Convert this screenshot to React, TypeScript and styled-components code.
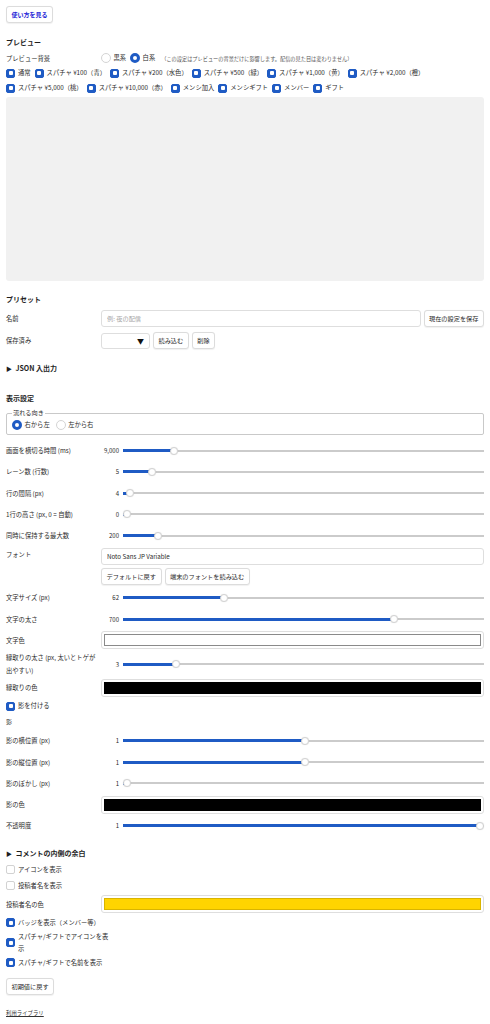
import React from 'react';
import styled, { createGlobalStyle } from 'styled-components';

const BLUE = '#1f5bc4';

const GlobalStyle = createGlobalStyle`
  html, body { margin: 0; padding: 0; background: #fff; }
  body {
    font-family: "Noto Sans CJK JP", "Noto Sans", sans-serif;
    font-size: 6.3px;
    color: #2a2a2a;
  }
  * { box-sizing: border-box; }
`;

const Page = styled.div`
  display: flex;
  flex-direction: column;
  padding: 6px 6px 10px;
`;

const Button = styled.button<{ $primary?: boolean; $mt?: number }>`
  align-self: flex-start;
  height: 17px;
  padding: 0 4.5px;
  margin: ${(p) => (p.$mt ? `${p.$mt}px` : '0')} 0 0;
  border: 1px solid #dcdcdc;
  border-radius: 3px;
  background: #fff;
  font-family: inherit;
  font-size: ${(p) => (p.$primary ? '6px' : '6.2px')};
  font-weight: ${(p) => (p.$primary ? 700 : 400)};
  color: ${(p) => (p.$primary ? '#1b1bd6' : '#2a2a2a')};
  white-space: nowrap;
  box-shadow: 0 0.5px 1px rgba(0, 0, 0, 0.06);
  cursor: pointer;
  flex: none;
`;

const Title = styled.h2<{ $mt: number }>`
  margin: ${(p) => p.$mt}px 0 0;
  font-size: 7px;
  font-weight: 700;
  line-height: 13px;
  color: #1e1e1e;
`;

const FieldRow = styled.div<{ $h?: string; $mt?: number; $pad?: boolean }>`
  display: grid;
  grid-template-columns: 92px 1fr;
  column-gap: 3px;
  align-items: center;
  min-height: ${(p) => p.$h ?? '21.25px'};
  margin-top: ${(p) => (p.$mt ? `${p.$mt}px` : '0')};
  padding: ${(p) => (p.$pad ? '2px 0' : '0')};
`;

const FieldLabel = styled.div<{ $top?: boolean }>`
  line-height: 13px;
  align-self: ${(p) => (p.$top ? 'start' : 'center')};
  color: #2a2a2a;
`;

const InlineGroup = styled.div<{ $gap?: number }>`
  display: flex;
  align-items: center;
  gap: ${(p) => p.$gap ?? 3}px;
  min-width: 0;
`;

const RadioInput = styled.input.attrs({ type: 'radio' })`
  appearance: none;
  -webkit-appearance: none;
  width: 10px;
  height: 10px;
  margin: 0;
  border-radius: 50%;
  border: 1px solid #d4d4d4;
  background: #fff;
  flex: none;
  &:checked {
    border: 3px solid ${BLUE};
  }
`;

const RadioItem = styled.label`
  display: inline-flex;
  align-items: center;
  gap: 2.5px;
  line-height: 10px;
  white-space: nowrap;
`;

const Note = styled.span`
  margin-left: 2px;
  font-size: 5.2px;
  color: #555;
  white-space: nowrap;
`;

const CheckInput = styled.input.attrs({ type: 'checkbox' })`
  appearance: none;
  -webkit-appearance: none;
  position: relative;
  width: 9px;
  height: 9px;
  margin: 0;
  border-radius: 2px;
  border: 1px solid #d2d2d2;
  background: #fff;
  flex: none;
  &:checked {
    border-color: ${BLUE};
    background: ${BLUE};
  }
  &:checked::after {
    content: '';
    position: absolute;
    left: 1.5px;
    top: 1.5px;
    width: 4px;
    height: 4px;
    border-radius: 1px;
    background: #fff;
  }
`;

const CheckWrap = styled.div`
  display: flex;
  flex-wrap: wrap;
  column-gap: 4px;
  row-gap: 3px;
  margin-top: 2.5px;
`;

const CheckItem = styled.label<{ $narrow?: boolean }>`
  display: flex;
  align-items: center;
  gap: 3px;
  line-height: 12px;
  min-height: ${(p) => (p.$narrow ? '16px' : '12px')};
  max-width: ${(p) => (p.$narrow ? '106px' : 'none')};
  white-space: ${(p) => (p.$narrow ? 'normal' : 'nowrap')};
`;

const PreviewBox = styled.div`
  height: 184px;
  margin-top: 3px;
  border-radius: 3px;
  background: #f1f1f1;
`;

const TextInput = styled.input`
  width: 100%;
  min-width: 0;
  height: 17px;
  padding: 0 5px;
  border: 1px solid #dedede;
  border-radius: 3px;
  font-family: inherit;
  font-size: 6.2px;
  color: #2a2a2a;
  &::placeholder {
    color: #a8a8a8;
  }
`;

const SelectBox = styled.div`
  width: 49px;
  height: 16px;
  display: flex;
  align-items: center;
  justify-content: flex-end;
  padding-right: 5px;
  border: 1px solid #dedede;
  border-radius: 3px;
  font-size: 7px;
  color: #111;
  flex: none;
`;

const Disclosure = styled.details<{ $mt: number }>`
  margin-top: ${(p) => p.$mt}px;
  & > summary {
    list-style: none;
    display: flex;
    align-items: center;
    gap: 3.5px;
    font-size: 7px;
    font-weight: 700;
    line-height: 13px;
    color: #1e1e1e;
    cursor: pointer;
  }
  & > summary::-webkit-details-marker {
    display: none;
  }
`;

const Caret = styled.span`
  font-size: 6px;
  line-height: 13px;
`;

const Fieldset = styled.fieldset`
  margin: 4.5px 0 0;
  padding: 3px 5px 4px;
  border: 1px solid #c9c9c9;
  border-radius: 2px;
  & > legend {
    padding: 0 1px;
    font-size: 6.2px;
    line-height: 8px;
  }
`;

const Stack = styled.div<{ $mt: number }>`
  display: flex;
  flex-direction: column;
  margin-top: ${(p) => p.$mt}px;
`;

const SliderWrap = styled.div`
  display: flex;
  align-items: center;
  gap: 4px;
`;

const SliderValue = styled.span`
  width: 18px;
  text-align: right;
  font-size: 6px;
  line-height: 13px;
  flex: none;
`;

const Range = styled.input.attrs({ type: 'range' })`
  -webkit-appearance: none;
  appearance: none;
  flex: 1;
  min-width: 0;
  height: 8px;
  margin: 0;
  background:
    linear-gradient(${BLUE}, ${BLUE}) left center / var(--fill) 3px no-repeat,
    linear-gradient(#cbcbcb, #cbcbcb) left center / 100% 2px no-repeat;
  &::-webkit-slider-runnable-track {
    height: 8px;
    background: transparent;
  }
  &::-webkit-slider-thumb {
    -webkit-appearance: none;
    width: 8px;
    height: 8px;
    border-radius: 50%;
    background: #fff;
    border: 1px solid #d2d2d2;
    box-shadow: 0 0 1px rgba(0, 0, 0, 0.15);
  }
`;

const ColorField = styled.div`
  height: 18px;
  padding: 2px;
  border: 1px solid #dedede;
  border-radius: 3px;
  display: flex;
`;

const Swatch = styled.div<{ $color: string; $edge: string }>`
  flex: 1;
  background: ${(p) => p.$color};
  border: 1px solid ${(p) => p.$edge};
`;

const PlainRow = styled.div`
  line-height: 16px;
  height: 16px;
  font-size: 6px;
`;

const FootLink = styled.a`
  margin-top: 13px;
  align-self: flex-start;
  font-size: 5.4px;
  line-height: 10px;
  color: #333;
  text-decoration: underline;
`;

type SliderProps = { label: string; value: string; pct: number };

const SliderField = ({ label, value, pct }: SliderProps) => (
  <FieldRow>
    <FieldLabel>{label}</FieldLabel>
    <SliderWrap>
      <SliderValue>{value}</SliderValue>
      <Range
        min={0}
        max={1000}
        defaultValue={Math.round(pct * 1000)}
        style={{ ['--fill' as string]: `calc(4px + ${pct} * (100% - 8px))` } as React.CSSProperties}
      />
    </SliderWrap>
  </FieldRow>
);

const ColorRow = ({ label, color, edge }: { label: string; color: string; edge: string }) => (
  <FieldRow>
    <FieldLabel>{label}</FieldLabel>
    <ColorField>
      <Swatch $color={color} $edge={edge} />
    </ColorField>
  </FieldRow>
);

const Check = ({ label, checked, narrow }: { label: string; checked?: boolean; narrow?: boolean }) => (
  <CheckItem $narrow={narrow}>
    <CheckInput defaultChecked={checked} />
    <span>{label}</span>
  </CheckItem>
);

const previewTypes = [
  '通常',
  'スパチャ ¥100（青）',
  'スパチャ ¥200（水色）',
  'スパチャ ¥500（緑）',
  'スパチャ ¥1,000（黄）',
  'スパチャ ¥2,000（橙）',
  'スパチャ ¥5,000（桃）',
  'スパチャ ¥10,000（赤）',
  'メンシ加入',
  'メンシギフト',
  'メンバー',
  'ギフト',
];

export default function App() {
  return (
    <>
      <GlobalStyle />
      <Page>
        <Button $primary>使い方を見る</Button>

        <Title $mt={12.5}>プレビュー</Title>
        <FieldRow $h="13px" $mt={3}>
          <FieldLabel>プレビュー背景</FieldLabel>
          <InlineGroup $gap={4}>
            <RadioItem>
              <RadioInput name="bg" />
              黒系
            </RadioItem>
            <RadioItem>
              <RadioInput name="bg" defaultChecked />
              白系
            </RadioItem>
            <Note>（この設定はプレビューの背景だけに影響します。配信の見た目は変わりません）</Note>
          </InlineGroup>
        </FieldRow>
        <CheckWrap>
          {previewTypes.map((t) => (
            <Check key={t} label={t} checked />
          ))}
        </CheckWrap>
        <PreviewBox />

        <Title $mt={11.5}>プリセット</Title>
        <FieldRow $h="17px" $mt={4.5}>
          <FieldLabel>名前</FieldLabel>
          <InlineGroup>
            <TextInput placeholder="例: 夜の配信" />
            <Button>現在の設定を保存</Button>
          </InlineGroup>
        </FieldRow>
        <FieldRow $h="16px" $mt={5}>
          <FieldLabel>保存済み</FieldLabel>
          <InlineGroup>
            <SelectBox>▼</SelectBox>
            <Button>読み込む</Button>
            <Button>削除</Button>
          </InlineGroup>
        </FieldRow>

        <Disclosure $mt={12.5}>
          <summary>
            <Caret>▶</Caret>
            JSON 入出力
          </summary>
        </Disclosure>

        <Title $mt={17}>表示設定</Title>
        <Fieldset>
          <legend>流れる向き</legend>
          <InlineGroup $gap={6}>
            <RadioItem>
              <RadioInput name="dir" defaultChecked />
              右から左
            </RadioItem>
            <RadioItem>
              <RadioInput name="dir" />
              左から右
            </RadioItem>
          </InlineGroup>
        </Fieldset>

        <Stack $mt={5}>
          <SliderField label="画面を横切る時間 (ms)" value="9,000" pct={0.133} />
          <SliderField label="レーン数 (行数)" value="5" pct={0.071} />
          <SliderField label="行の間隔 (px)" value="4" pct={0.008} />
          <SliderField label="1行の高さ (px, 0 = 自動)" value="0" pct={0} />
          <SliderField label="同時に保持する最大数" value="200" pct={0.088} />
          <FieldRow $pad>
            <FieldLabel $top>フォント</FieldLabel>
            <Stack $mt={0}>
              <TextInput defaultValue="Noto Sans JP Variable" />
              <InlineGroup>
                <Button $mt={3}>デフォルトに戻す</Button>
                <Button $mt={3}>端末のフォントを読み込む</Button>
              </InlineGroup>
            </Stack>
          </FieldRow>
          <SliderField label="文字サイズ (px)" value="62" pct={0.275} />
          <SliderField label="文字の太さ" value="700" pct={0.756} />
          <ColorRow label="文字色" color="#ffffff" edge="#8a8a8a" />
          <SliderField label="縁取りの太さ (px, 太いとトゲが出やすい)" value="3" pct={0.139} />
          <ColorRow label="縁取りの色" color="#000000" edge="#000000" />
          <Check label="影を付ける" checked narrow />
          <PlainRow>影</PlainRow>
          <SliderField label="影の横位置 (px)" value="1" pct={0.504} />
          <SliderField label="影の縦位置 (px)" value="1" pct={0.504} />
          <SliderField label="影のぼかし (px)" value="1" pct={0} />
          <ColorRow label="影の色" color="#000000" edge="#000000" />
          <SliderField label="不透明度" value="1" pct={1} />
        </Stack>

        <Disclosure $mt={10.6}>
          <summary>
            <Caret>▶</Caret>
            コメントの内側の余白
          </summary>
        </Disclosure>

        <Stack $mt={1.5}>
          <Check label="アイコンを表示" narrow />
          <Check label="投稿者名を表示" narrow />
          <ColorRow label="投稿者名の色" color="#ffd400" edge="#d9b400" />
          <Check label="バッジを表示（メンバー等）" checked narrow />
          <Check label="スパチャ/ギフトでアイコンを表示" checked narrow />
          <Check label="スパチャ/ギフトで名前を表示" checked narrow />
        </Stack>

        <Button $mt={6.75}>初期値に戻す</Button>
        <FootLink href="#">利用ライブラリ</FootLink>
      </Page>
    </>
  );
}
